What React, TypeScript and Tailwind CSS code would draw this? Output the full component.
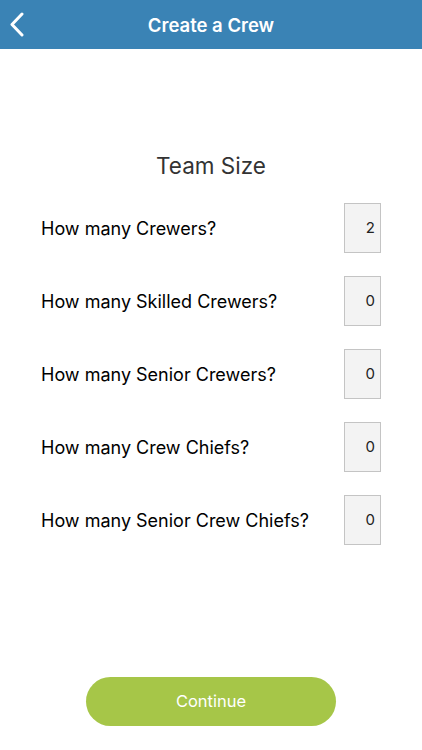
export default function App() {
  const rows = [
    ["How many Crewers?", "2"],
    ["How many Skilled Crewers?", "0"],
    ["How many Senior Crewers?", "0"],
    ["How many Crew Chiefs?", "0"],
    ["How many Senior Crew Chiefs?", "0"],
  ];
  return (
    <div className="w-[422px] h-[750px] bg-white flex flex-col" style={{ fontFamily: "Inter, 'Liberation Sans', sans-serif" }}>
      <div className="h-[49px] bg-[#3a83b5] relative flex items-center justify-center pt-[2px]">
        <svg className="absolute left-[9px] top-[12px]" width="16" height="25" viewBox="0 0 16 25">
          <path d="M13 2 L3 12.5 L13 23" stroke="white" strokeWidth="3" fill="none" strokeLinecap="round" strokeLinejoin="round" />
        </svg>
        <span className="text-white text-[18.5px] font-semibold">Create a Crew</span>
      </div>
      <div className="pt-[103px] text-center text-[22.5px] leading-[28px] text-[#333]">Team Size</div>
      <div className="mt-[23px] flex flex-col gap-[23px] pl-[41px] pr-[41px]">
        {rows.map(([label, v]) => (
          <div key={label} className="flex items-center justify-between h-[50px]">
            <span className="text-[18px] text-black">{label}</span>
            <div className="w-[37px] h-[50px] border border-[#c4c4c4] bg-[#f3f3f3] flex items-center justify-end pr-[5px] text-[15px] text-[#222]">{v}</div>
          </div>
        ))}
      </div>
      <div className="mt-[132px] flex justify-center">
        <div className="w-[250px] h-[49px] rounded-full bg-[#a6c648] flex items-center justify-center text-white text-[16.5px]">Continue</div>
      </div>
    </div>
  );
}
